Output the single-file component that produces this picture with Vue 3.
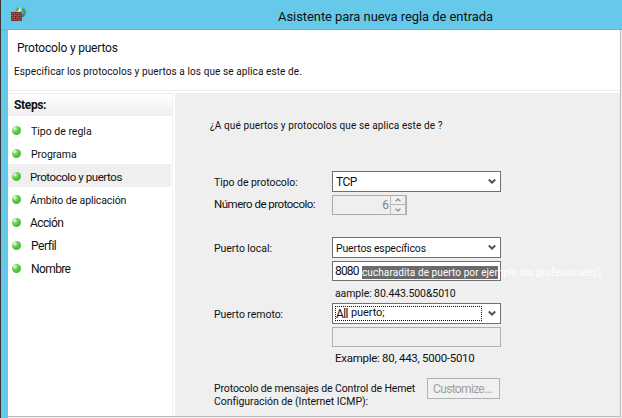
<script setup>
const steps = [
  { label: 'Tipo de regla', cls: 'small' },
  { label: 'Programa', cls: 'small prog' },
  { label: 'Protocolo y puertos', cls: 'tight current' },
  { label: 'Ámbito de aplicación', cls: 'small ambito' },
  { label: 'Acción', cls: 'tight accion' },
  { label: 'Perfil', cls: 'tight' },
  { label: 'Nombre', cls: 'tight nombre' },
]
const active = 2
</script>

<template>
  <div class="window">
    <header class="titlebar">
      <svg class="app-icon" width="16" height="16" viewBox="0 0 16 16">
        <defs>
          <radialGradient id="globe" cx=".4" cy=".3" r=".75">
            <stop offset="0" stop-color="#e6faff" />
            <stop offset=".4" stop-color="#6cc0f2" />
            <stop offset="1" stop-color="#1b55b0" />
          </radialGradient>
        </defs>
        <circle cx="9.3" cy="6" r="5.7" fill="url(#globe)" />
        <path d="M4.6 3.5 7 1.2l1.4.6L7.4 4l-2 1.6zM11 1.6l2.4 1.6 1.2 3-1 3-1.6-.6.2-2-1.8-2z" fill="#3fae49" />
        <path d="M0 6h11v9H0z" fill="#7c3027" />
        <path d="M1 7h3v1H1zm4 0h3v1H5zm4 0h2v1H9zM0 9h2v1H0zm3 0h3v1H3zm4 0h3v1H7zM1 11h3v1H1zm4 0h3v1H5zm4 0h2v1H9zM0 13h2v1H0zm3 0h3v1H3zm4 0h3v1H7z" fill="#ad5a4a" />
      </svg>
      <h1>Asistente para nueva regla de entrada</h1>
    </header>
    <div class="body">
      <section class="intro">
        <h2>Protocolo y puertos</h2>
        <p>Especificar los protocolos y puertos a los que se aplica este de.</p>
      </section>
      <div class="columns">
        <nav>
          <div class="nav-head">Steps:</div>
          <ul>
            <li v-for="(s, i) in steps" :key="s.label" :class="{ active: i === active }">
              <i class="dot"></i><span :class="s.cls">{{ s.label }}</span>
            </li>
          </ul>
        </nav>
        <main>
          <p class="question">¿A qué puertos y protocolos que se aplica este de ?</p>
          <div class="row first">
            <label>Tipo de protocolo:</label>
            <div class="select"><span class="tcp">TCP</span>
              <svg class="chev" width="8" height="7" viewBox="0 0 8 7"><path d="M.8 1.5 4 4.7 7.2 1.5" /></svg>
            </div>
          </div>
          <div class="row num">
            <label class="l-num">Número de protocolo:</label>
            <div class="spinner"><span>6</span>
              <div class="spin-buttons">
                <b><svg width="6" height="4" viewBox="0 0 6 4"><path d="M.6 3.3 3 1l2.4 2.3" /></svg></b>
                <b><svg width="6" height="4" viewBox="0 0 6 4"><path d="M.6.7 3 3 5.4.7" /></svg></b>
              </div>
            </div>
          </div>
          <div class="row local">
            <label>Puerto local:</label>
            <div class="select"><span class="specific">Puertos específicos</span>
              <svg class="chev" width="8" height="7" viewBox="0 0 8 7"><path d="M.8 1.5 4 4.7 7.2 1.5" /></svg>
            </div>
          </div>
          <div class="row port">
            <div class="input"><span class="value">8080</span>
              <div class="selection"><span>cucharadita de puerto por ejemplo los profesionales)</span></div>
            </div>
          </div>
          <div class="row hint"><span class="hint-one">aample: 80.443.500&amp;5010</span></div>
          <div class="row remote">
            <label>Puerto remoto:</label>
            <div class="select focused">
              <div class="focus-ring"><span class="all">All</span><span class="puerto">puerto;</span></div>
              <svg class="chev" width="8" height="7" viewBox="0 0 8 7"><path d="M.8 1.5 4 4.7 7.2 1.5" /></svg>
            </div>
          </div>
          <div class="row blank"><div class="input disabled"></div></div>
          <div class="row hint two"><span class="hint-two">Example: 80, 443, 5000-5010</span></div>
          <div class="icmp">
            <p><span class="icmp-one">Protocolo de mensajes de Control de Hemet</span><br /><span class="icmp-two">Configuración de (Internet ICMP):</span></p>
            <button disabled>Customize...</button>
          </div>
        </main>
      </div>
    </div>
  </div>
</template>

<style>
body { margin: 0; background: #efefef; overflow: hidden; }
</style>

<style scoped>
* { box-sizing: border-box; }
h1, h2, p, ul { margin: 0; padding: 0; font-weight: 400; }
.window {
  width: 622px; height: 418px; overflow: hidden; color: #111;
  font-family: Roboto, "Liberation Sans", sans-serif; font-size: 12px; white-space: nowrap;
  background: linear-gradient(90deg, #37383c 1px, #a1b1b9 1px 2px, #66c9e9 2px 8px, #efefef 8px);
}
.titlebar { height: 30px; display: flex; margin-left: 2px; background: #66c9e9; border-bottom: 1px solid #75afc3; }
.app-icon { margin: 6px 0 0 9px; flex: none; }
h1 { font-size: 13px; line-height: 18px; margin: 8px 0 0 251px; letter-spacing: -.07px; }
.body { margin-left: 8px; width: 613px; height: 387px; background: #fff; border-right: 1px solid #bdbdbd; border-bottom: 1px solid #bdbdbd; }
.intro { height: 61px; border-bottom: 1px solid #eee; display: flex; flex-direction: column; }
h2 { font-size: 12px; line-height: 16px; margin: 10px 0 0 9px; letter-spacing: -.2px; }
.intro p { font-size: 10px; line-height: 14px; margin: 9px 0 0 6px; letter-spacing: .1px; }
.columns { display: flex; height: 325px; padding-top: 2px; }
nav { width: 165px; border-right: 1px solid #f1f1f1; margin-right: 2px; flex: none; }
.nav-head { height: 23px; border-top: 1px solid #eee; background: linear-gradient(#fff, #efefef); font-size: 12px; font-weight: 700; line-height: 23px; padding-left: 6px; letter-spacing: -.35px; }
ul { list-style: none; padding-top: 2px; }
li { height: 23px; display: flex; align-items: center; padding-left: 4px; margin-right: 1px; }
li.active { background: #efefef; }
.dot { width: 9px; height: 9px; margin-top: 2px; border-radius: 50%; background: radial-gradient(circle at 30% 28%, #d6f4ce 0 8%, #6ccf56 34%, #45bd32 65%, #77bd6c); margin-right: 10px; }
li span { line-height: 15px; margin-top: 3px; }
.small { font-size: 10.5px; }
.prog { letter-spacing: -.05px; }
.ambito { margin-left: -1px; letter-spacing: -.1px; }
.tight { font-size: 12px; letter-spacing: -.45px; }
.current { margin-left: -1px; font-size: 11.5px; letter-spacing: -.43px; }
.accion { margin-left: -1px; letter-spacing: -.6px; }
.nombre { letter-spacing: -.6px; }
main { flex: 1; background: #efefef; padding-left: 39px; }
.question { font-size: 10px; line-height: 14px; margin: 26px 0 0 -4px; letter-spacing: .1px; }
.row { display: grid; grid-template-columns: 118px 169px; }
.row > :not(label) { grid-column: 2; }
.first { margin-top: 38px; }
label { font-size: 10.5px; line-height: 23px; height: 21px; letter-spacing: -.05px; }
.select, .input { height: 21px; width: 169px; border: 1px solid #6f6f6f; background: #fff; display: flex; align-items: center; padding: 0 4px 0 3px; }
.select > span { flex: 1; }
.chev { flex: none; }
.chev path { fill: none; stroke: #505050; stroke-width: 2; }
.tcp { font-size: 12px; letter-spacing: -.5px; }
.specific { font-size: 10.5px; line-height: 14px; padding: 3px 0 0; letter-spacing: -.15px; }
.num { margin-top: 3px; }
.l-num { font-size: 11.5px; line-height: 19px; height: 20px; letter-spacing: -.5px; }
.spinner { height: 20px; width: 75px; border: 1px solid #acacb0; display: flex; color: #838383; }
.spinner > span { flex: 1; text-align: right; line-height: 18px; padding-right: 1px; font-size: 12px; }
.spin-buttons { width: 16px; display: grid; grid-template-rows: 1fr 1fr; border: solid #bbb; border-width: 0 1px 0 1px; }
.spin-buttons b { display: flex; align-items: center; justify-content: center; border-bottom: 1px solid #b5b5b5; }
.spin-buttons b + b { border-bottom: 0; }
.spin-buttons path { fill: none; stroke: #888; stroke-width: 1.2; }
.local { margin-top: 22px; }
.port { margin-top: 3px; }
.input { height: 20px; padding: 0 2px; }
.value { font-size: 12px; width: 27px; letter-spacing: -.85px; }
.selection { width: 136px; height: 13px; margin-top: 3px; background: #6b6b6b; color: #fff; font-size: 10px; line-height: 14px; }
.selection span { letter-spacing: .09px; }
.hint { margin-top: 5px; height: 14px; line-height: 14px; padding-left: 3px; }
.hint-one { font-size: 10.5px; letter-spacing: -.09px; line-height: 16px; }
.remote { margin-top: 3px; }
.focused { padding-left: 2px; }
.focus-ring { width: 147px; height: 15px; border: 1px dotted #111; margin-right: auto; display: flex; line-height: 14px; font-size: 12px; }
.all { width: 15px; letter-spacing: -.6px; }
.puerto { font-size: 11px; line-height: 11px; letter-spacing: -.1px; }
.blank { margin-top: 3px; }
.disabled { background: #efefef; border-color: #acb0b0; }
.two { margin-top: 4px; }
.hint-two { font-size: 11.5px; letter-spacing: -.28px; }
.icmp { display: flex; justify-content: space-between; width: 286px; margin-top: 13px; }
.icmp p { font-size: 10.5px; line-height: 13px; margin-top: 4px; }
.icmp-one { letter-spacing: -.12px; }
.icmp-two { letter-spacing: -.06px; }
button { width: 73px; height: 21px; border: 1px solid #adb2b2; background: #f1f1f1; color: #a0a0a0; font: 12px Roboto, sans-serif; letter-spacing: -.65px; text-align: left; padding: 1px 0 0 5px; }
</style>
